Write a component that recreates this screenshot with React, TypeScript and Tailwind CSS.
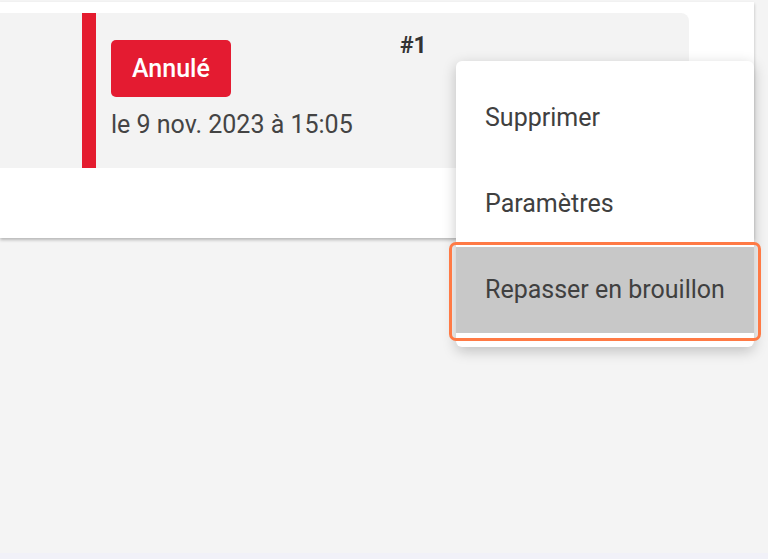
export default function App() {
  return (
    <div className="relative w-[768px] h-[559px] overflow-hidden bg-[#f4f4f4]" style={{ fontFamily: 'Roboto, "Noto Sans", sans-serif' }}>
      <div className="mt-[2px] w-[754px] h-[236px] bg-white pt-[11px] shadow-[0_2px_3px_rgba(0,0,0,0.25)]">
        <div className="flex h-[155px] w-[689px] rounded-tr-lg bg-[#f3f3f3] pl-[82px]">
          <div className="w-[14px] bg-[#e41b2e]" />
          <div className="flex w-[304px] flex-col items-start pl-[15px] pt-[27px]">
            <span className="rounded-[5px] bg-[#e41b31] px-[21px] py-[13px] text-[25px] font-medium leading-[31px] text-white">
              Annulé
            </span>
            <span className="mt-[13px] text-[25px] leading-[30px] text-[#444]">le 9 nov. 2023 à 15:05</span>
          </div>
          <div className="pt-[18px] text-[23px] font-bold leading-[30px] text-[#333]">#1</div>
        </div>
      </div>

      <div className="absolute left-[456px] top-[61px] w-[298px] rounded-md bg-white py-[14px] shadow-[0_4px_14px_rgba(0,0,0,0.22)]">
        <div className="flex h-[86px] items-center px-[29px] text-[25px] text-[#404040]">Supprimer</div>
        <div className="flex h-[86px] items-center px-[29px] text-[25px] text-[#404040]">Paramètres</div>
        <div className="relative flex h-[86px] items-center bg-[#c8c8c8] px-[29px] text-[25px] text-[#404040]">
          Repasser en brouillon
          <div className="absolute -left-[7px] -right-[7px] -top-[5px] -bottom-[8px] rounded-[7px] border-[3px] border-[#ff7a45]" />
        </div>
      </div>

      <div className="absolute bottom-0 left-0 h-[6px] w-full bg-[#f1f1f8]" />
    </div>
  )
}
